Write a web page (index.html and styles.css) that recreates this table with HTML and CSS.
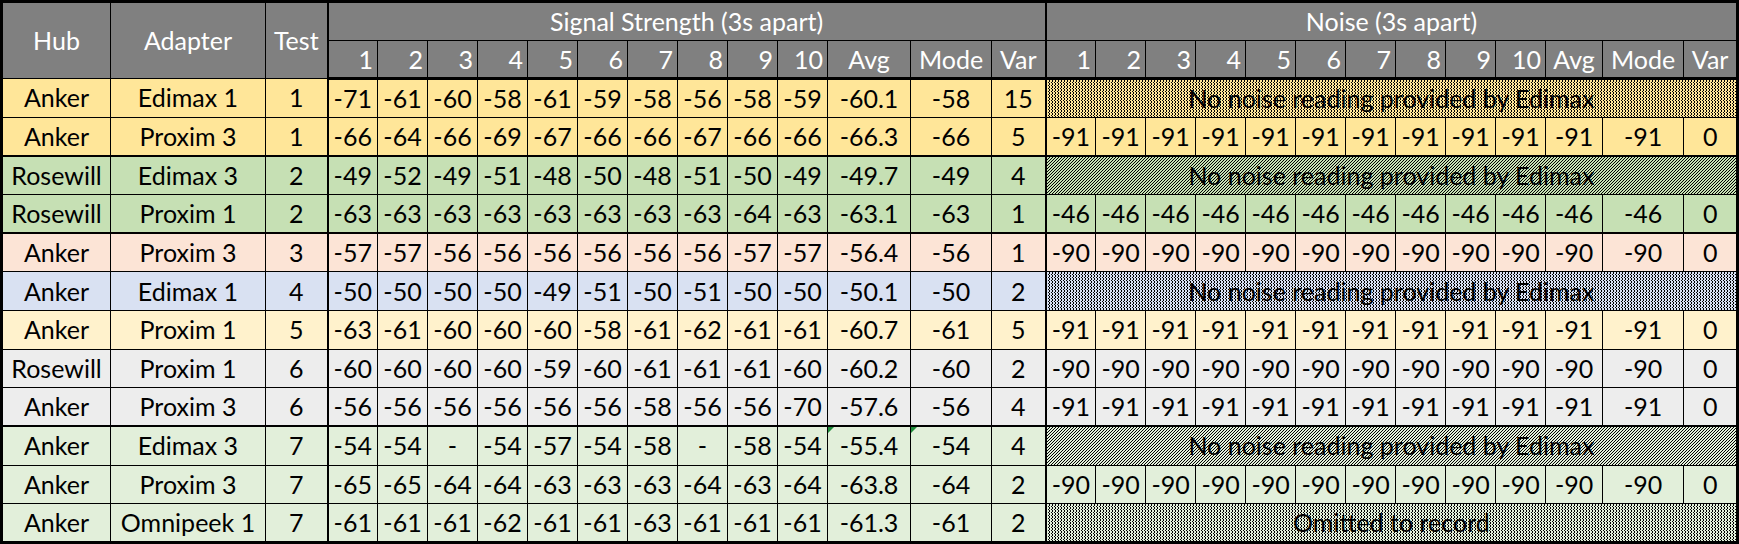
FILE: index.html
```html
<!DOCTYPE html>
<html>
<head>
<meta charset="utf-8">
<title>Signal and Noise</title>
<link rel="stylesheet" href="styles.css">
</head>
<body>
<table class="sheet">
<colgroup>
<col class="c-hub"><col class="c-adapter"><col class="c-test">
<col class="c-n"><col class="c-n"><col class="c-n"><col class="c-n"><col class="c-n"><col class="c-n"><col class="c-n"><col class="c-n"><col class="c-n"><col class="c-n">
<col class="c-savg"><col class="c-mode"><col class="c-var">
<col class="c-n"><col class="c-n"><col class="c-n"><col class="c-n"><col class="c-n"><col class="c-n"><col class="c-n"><col class="c-n"><col class="c-n"><col class="c-n">
<col class="c-navg"><col class="c-mode"><col class="c-nvar">
</colgroup>
<thead>
<tr class="h1">
<th rowspan="2">Hub</th><th rowspan="2">Adapter</th><th rowspan="2">Test</th>
<th colspan="13" class="sl">Signal Strength (3s apart)</th>
<th colspan="13" class="sl">Noise (3s apart)</th>
</tr>
<tr class="h2">
<th class="num sl">1</th><th class="num">2</th><th class="num">3</th><th class="num">4</th><th class="num">5</th><th class="num">6</th><th class="num">7</th><th class="num">8</th><th class="num">9</th><th class="num">10</th><th>Avg</th><th>Mode</th><th>Var</th>
<th class="num sl">1</th><th class="num">2</th><th class="num">3</th><th class="num">4</th><th class="num">5</th><th class="num">6</th><th class="num">7</th><th class="num">8</th><th class="num">9</th><th class="num">10</th><th>Avg</th><th>Mode</th><th>Var</th>
</tr>
</thead>
<tbody>
<tr class="t1">
<td>Anker</td><td>Edimax 1</td><td>1</td>
<td class="sl">-71</td><td>-61</td><td>-60</td><td>-58</td><td>-61</td><td>-59</td><td>-58</td><td>-56</td><td>-58</td><td>-59</td><td>-60.1</td><td>-58</td><td>15</td>
<td colspan="13" class="sl hatch">No noise reading provided by Edimax</td>
</tr>
<tr class="t1">
<td>Anker</td><td>Proxim 3</td><td>1</td>
<td class="sl">-66</td><td>-64</td><td>-66</td><td>-69</td><td>-67</td><td>-66</td><td>-66</td><td>-67</td><td>-66</td><td>-66</td><td>-66.3</td><td>-66</td><td>5</td>
<td class="sl">-91</td><td>-91</td><td>-91</td><td>-91</td><td>-91</td><td>-91</td><td>-91</td><td>-91</td><td>-91</td><td>-91</td><td>-91</td><td>-91</td><td>0</td>
</tr>
<tr class="t2 gsep">
<td>Rosewill</td><td>Edimax 3</td><td>2</td>
<td class="sl">-49</td><td>-52</td><td>-49</td><td>-51</td><td>-48</td><td>-50</td><td>-48</td><td>-51</td><td>-50</td><td>-49</td><td>-49.7</td><td>-49</td><td>4</td>
<td colspan="13" class="sl hatch">No noise reading provided by Edimax</td>
</tr>
<tr class="t2">
<td>Rosewill</td><td>Proxim 1</td><td>2</td>
<td class="sl">-63</td><td>-63</td><td>-63</td><td>-63</td><td>-63</td><td>-63</td><td>-63</td><td>-63</td><td>-64</td><td>-63</td><td>-63.1</td><td>-63</td><td>1</td>
<td class="sl">-46</td><td>-46</td><td>-46</td><td>-46</td><td>-46</td><td>-46</td><td>-46</td><td>-46</td><td>-46</td><td>-46</td><td>-46</td><td>-46</td><td>0</td>
</tr>
<tr class="t3 gsep">
<td>Anker</td><td>Proxim 3</td><td>3</td>
<td class="sl">-57</td><td>-57</td><td>-56</td><td>-56</td><td>-56</td><td>-56</td><td>-56</td><td>-56</td><td>-57</td><td>-57</td><td>-56.4</td><td>-56</td><td>1</td>
<td class="sl">-90</td><td>-90</td><td>-90</td><td>-90</td><td>-90</td><td>-90</td><td>-90</td><td>-90</td><td>-90</td><td>-90</td><td>-90</td><td>-90</td><td>0</td>
</tr>
<tr class="t4">
<td>Anker</td><td>Edimax 1</td><td>4</td>
<td class="sl">-50</td><td>-50</td><td>-50</td><td>-50</td><td>-49</td><td>-51</td><td>-50</td><td>-51</td><td>-50</td><td>-50</td><td>-50.1</td><td>-50</td><td>2</td>
<td colspan="13" class="sl hatch">No noise reading provided by Edimax</td>
</tr>
<tr class="t5">
<td>Anker</td><td>Proxim 1</td><td>5</td>
<td class="sl">-63</td><td>-61</td><td>-60</td><td>-60</td><td>-60</td><td>-58</td><td>-61</td><td>-62</td><td>-61</td><td>-61</td><td>-60.7</td><td>-61</td><td>5</td>
<td class="sl">-91</td><td>-91</td><td>-91</td><td>-91</td><td>-91</td><td>-91</td><td>-91</td><td>-91</td><td>-91</td><td>-91</td><td>-91</td><td>-91</td><td>0</td>
</tr>
<tr class="t6">
<td>Rosewill</td><td>Proxim 1</td><td>6</td>
<td class="sl">-60</td><td>-60</td><td>-60</td><td>-60</td><td>-59</td><td>-60</td><td>-61</td><td>-61</td><td>-61</td><td>-60</td><td>-60.2</td><td>-60</td><td>2</td>
<td class="sl">-90</td><td>-90</td><td>-90</td><td>-90</td><td>-90</td><td>-90</td><td>-90</td><td>-90</td><td>-90</td><td>-90</td><td>-90</td><td>-90</td><td>0</td>
</tr>
<tr class="t6">
<td>Anker</td><td>Proxim 3</td><td>6</td>
<td class="sl">-56</td><td>-56</td><td>-56</td><td>-56</td><td>-56</td><td>-56</td><td>-58</td><td>-56</td><td>-56</td><td>-70</td><td>-57.6</td><td>-56</td><td>4</td>
<td class="sl">-91</td><td>-91</td><td>-91</td><td>-91</td><td>-91</td><td>-91</td><td>-91</td><td>-91</td><td>-91</td><td>-91</td><td>-91</td><td>-91</td><td>0</td>
</tr>
<tr class="t7 gsep">
<td>Anker</td><td>Edimax 3</td><td>7</td>
<td class="sl">-54</td><td>-54</td><td>-</td><td>-54</td><td>-57</td><td>-54</td><td>-58</td><td>-</td><td>-58</td><td>-54</td><td class="flag">-55.4</td><td class="flag">-54</td><td>4</td>
<td colspan="13" class="sl hatch">No noise reading provided by Edimax</td>
</tr>
<tr class="t7">
<td>Anker</td><td>Proxim 3</td><td>7</td>
<td class="sl">-65</td><td>-65</td><td>-64</td><td>-64</td><td>-63</td><td>-63</td><td>-63</td><td>-64</td><td>-63</td><td>-64</td><td>-63.8</td><td>-64</td><td>2</td>
<td class="sl">-90</td><td>-90</td><td>-90</td><td>-90</td><td>-90</td><td>-90</td><td>-90</td><td>-90</td><td>-90</td><td>-90</td><td>-90</td><td>-90</td><td>0</td>
</tr>
<tr class="t7">
<td>Anker</td><td>Omnipeek 1</td><td>7</td>
<td class="sl">-61</td><td>-61</td><td>-61</td><td>-62</td><td>-61</td><td>-61</td><td>-63</td><td>-61</td><td>-61</td><td>-61</td><td>-61.3</td><td>-61</td><td>2</td>
<td colspan="13" class="sl hatch">Omitted to record</td>
</tr>
</tbody>
</table>
</body>
</html>
```
FILE: styles.css
```css
html, body {
  margin: 0;
  padding: 0;
  background: #ffffff;
}

.sheet {
  border-collapse: collapse;
  table-layout: fixed;
  width: 1739px;
  border: 3px solid #000;
  font-family: Lato, "Open Sans", sans-serif;
  font-size: 25px;
  color: #000;
}

.c-hub { width: 109px; }
.c-adapter { width: 155px; }
.c-test { width: 62px; }
.c-n { width: 50px; }
.c-savg { width: 83px; }
.c-mode { width: 81px; }
.c-var { width: 54px; }
.c-navg { width: 57px; }
.c-nvar { width: 54px; }

.sheet th,
.sheet td {
  border: 1px solid #000;
  padding: 0;
  text-align: center;
  vertical-align: middle;
  white-space: nowrap;
  overflow: hidden;
  font-weight: normal;
  line-height: 1;
}

.sheet thead th {
  background: #808080;
  color: #ffffff;
}

.sheet .h1 { height: 39px; }
.sheet .h2 { height: 38px; }
.sheet .h2 th { border-bottom: 3px solid #000; }
.sheet .h2 th.num {
  text-align: right;
  padding-right: 4px;
}

.sheet tbody tr { height: 38.67px; }

.sheet .sl { border-left: 2px solid #000; }
.sheet .gsep td { border-top: 2px solid #000; }

.t1 { background: #ffe699; }
.t2 { background: #c6e0b4; }
.t3 { background: #fce4d6; }
.t4 { background: #d9e1f2; }
.t5 { background: #fff2cc; }
.t6 { background: #ededed; }
.t7 { background: #e2efda; }

.sheet td.hatch {
  background-image: url("data:image/svg+xml,%3Csvg xmlns='http://www.w3.org/2000/svg' width='3' height='3' shape-rendering='crispEdges'%3E%3Cpath d='M2 0h1v1H2zM1 1h1v1H1zM0 2h1v1H0z' fill='%23000'/%3E%3C/svg%3E");
  background-size: 3px 3px;
}

.sheet td.flag { position: relative; }
.sheet td.flag::before {
  content: "";
  position: absolute;
  left: 0;
  top: 0;
  border-top: 6px solid #1e8c3a;
  border-right: 6px solid transparent;
}
```
